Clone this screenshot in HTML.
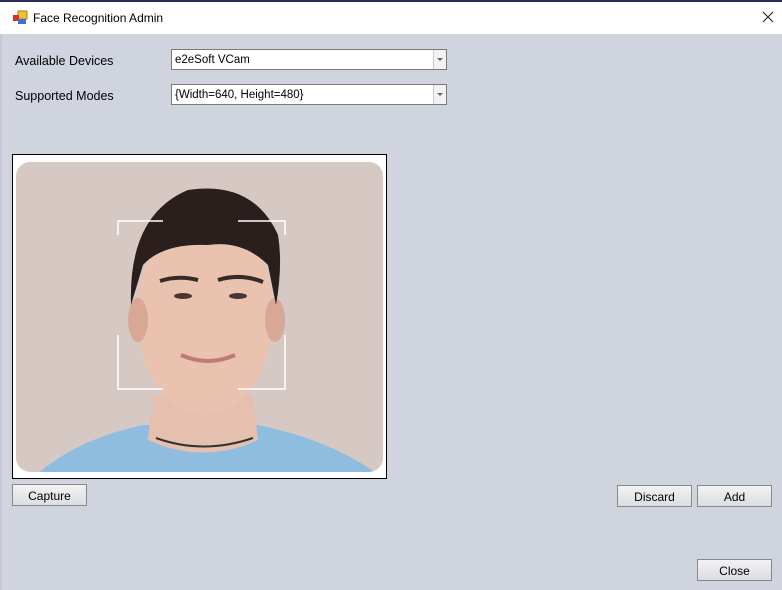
<!DOCTYPE html>
<html><head><meta charset="utf-8"><style>
body{margin:0;width:782px;height:590px;overflow:hidden;background:#d0d4de;font-family:"Liberation Sans",sans-serif;font-size:12px;color:#000;position:relative}
.top{position:absolute;left:0;top:0;width:782px;height:2px;background:#2a2f5a}
.title{position:absolute;left:0;top:2px;width:782px;height:32px;background:#fff}
.title .t{position:absolute;left:33px;top:9px;font-size:12px}
.lbl{position:absolute;left:15px;font-size:12.5px}
.combo{position:absolute;left:171px;width:274px;height:19px;background:#fff;border:1px solid #7a7a7a}
.combo span{position:absolute;left:3px;top:4px;font-size:11.5px}
.combo i{position:absolute;right:0;top:0;width:12px;height:19px;border-left:1px solid #ccc;background:#f2f2f2}
.combo i:after{content:"";position:absolute;left:3px;top:8px;border-left:3px solid transparent;border-right:3px solid transparent;border-top:3px solid #666}
.btn{position:absolute;width:73px;height:20px;border:1px solid #888;background:linear-gradient(#f2f2f4,#dcdde2);text-align:center;line-height:22px;font-size:12px}
.img{position:absolute;left:12px;top:154px;width:373px;height:323px;border:1px solid #000;background:#fff}
.left{position:absolute;left:0;top:34px;width:2px;height:556px;background:#c8c8d8}
</style></head><body>
<div class="top"></div>
<div class="title">
<svg style="position:absolute;left:12px;top:8px" width="16" height="16"><rect x="6" y="1" width="9" height="8" fill="#f0c030" stroke="#b08020"/><rect x="1" y="5" width="6" height="6" fill="#d03030"/><rect x="6" y="9" width="8" height="5" fill="#4070d0"/></svg>
<div class="t">Face Recognition Admin</div>
<svg style="position:absolute;left:762px;top:9px" width="12" height="12"><path d="M1 1L11 11M11 1L1 11" stroke="#222" stroke-width="1.1"/></svg>
</div>
<div class="left"></div>
<div class="lbl" style="top:54px">Available Devices</div>
<div class="lbl" style="top:89px">Supported Modes</div>
<div class="combo" style="top:49px"><span>e2eSoft VCam</span><i></i></div>
<div class="combo" style="top:84px"><span>{Width=640, Height=480}</span><i></i></div>
<div class="img">
<svg width="373" height="323" viewBox="0 0 373 323">
<defs><clipPath id="c"><rect x="3" y="7" width="367" height="310" rx="14"/></clipPath></defs>
<g clip-path="url(#c)">
<rect x="0" y="0" width="373" height="323" fill="#d6c9c4"/>
<path d="M20 323 Q60 285 130 270 L245 270 Q320 285 370 323Z" fill="#8fbde0"/>
<path d="M140 240 L135 285 Q190 310 245 285 L240 240Z" fill="#e6c0ae"/>
<path d="M143 283 Q190 300 240 283" stroke="#333" stroke-width="2" fill="none"/>
<ellipse cx="192" cy="160" rx="68" ry="100" fill="#e9c3b0"/>
<ellipse cx="125" cy="165" rx="10" ry="22" fill="#d8a896"/>
<ellipse cx="262" cy="165" rx="10" ry="22" fill="#d8a896"/>
<path d="M118 150 Q115 60 175 35 Q240 25 265 80 Q270 110 263 150 L255 110 Q230 85 195 90 Q150 88 130 110 Z" fill="#2a1f1c"/>
<path d="M147 126 Q165 120 185 125" stroke="#3a2a25" stroke-width="4" fill="none"/>
<path d="M205 125 Q228 118 250 127" stroke="#3a2a25" stroke-width="4" fill="none"/>
<ellipse cx="170" cy="141" rx="9" ry="3" fill="#4a3530"/>
<ellipse cx="225" cy="141" rx="9" ry="3" fill="#4a3530"/>
<path d="M168 200 Q195 212 222 200" stroke="#c07a78" stroke-width="4" fill="none"/>
<path d="M105 80 L105 66 L150 66 M225 66 L272 66 L272 80 M105 180 L105 234 L150 234 M225 234 L272 234 L272 180" stroke="#fff" stroke-width="1.5" fill="none"/>
</g></svg></div>
<div class="btn" style="left:12px;top:484px">Capture</div>
<div class="btn" style="left:617px;top:485px">Discard</div>
<div class="btn" style="left:697px;top:485px">Add</div>
<div class="btn" style="left:697px;top:559px">Close</div>
</body></html>
